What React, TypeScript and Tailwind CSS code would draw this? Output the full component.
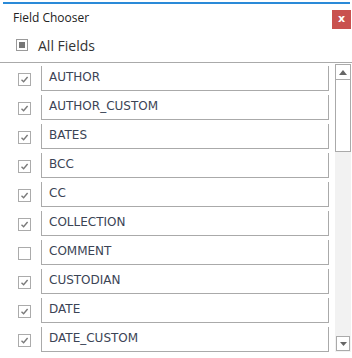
import React from "react";

const fields = [
  { name: "AUTHOR", checked: true },
  { name: "AUTHOR_CUSTOM", checked: true },
  { name: "BATES", checked: true },
  { name: "BCC", checked: true },
  { name: "CC", checked: true },
  { name: "COLLECTION", checked: true },
  { name: "COMMENT", checked: false },
  { name: "CUSTODIAN", checked: true },
  { name: "DATE", checked: true },
  { name: "DATE_CUSTOM", checked: true },
];

function CheckBox({ checked }: { checked: boolean }) {
  return (
    <div className="w-[13px] h-[13px] shrink-0 border border-[#ababab] bg-white flex items-center justify-center">
      {checked && (
        <svg width="9" height="9" viewBox="0 0 9 9">
          <path d="M1.5 4.8 L3.6 6.8 L7.6 2" fill="none" stroke="#7a7a7a" strokeWidth="1.4" />
        </svg>
      )}
    </div>
  );
}

export default function App() {
  return (
    <div className="w-[352px] h-[358px] bg-white overflow-hidden relative">
      <div className="pt-[2px] pl-[3px] pr-[2px]">
        <div className="h-[2px] bg-[#2a8ad8]" />
      </div>

      <div className="flex items-start justify-between h-[30px]">
        <span
          className="ml-[13px] mt-[6px] text-[12px] leading-[16px] text-[#222]"
          style={{ fontFamily: '"Open Sans", sans-serif' }}
        >
          Field Chooser
        </span>
        <button className="mt-[6px] mr-[1px] w-[19px] h-[19px] bg-[#c9514f] flex items-center justify-center">
          <span
            className="text-white text-[11px] font-bold leading-none mb-[2px]"
            style={{ fontFamily: '"DejaVu Sans", sans-serif' }}
          >
            x
          </span>
        </button>
      </div>

      <div className="flex items-center h-[22px] mb-[6px]">
        <div className="ml-[16px] w-[12px] h-[12px] border border-[#9a9a9a] flex items-center justify-center">
          <div className="w-[6px] h-[6px] bg-[#777]" />
        </div>
        <span
          className="ml-[10px] text-[14px] text-[#333]"
          style={{ fontFamily: '"Open Sans", sans-serif' }}
        >
          All Fields
        </span>
      </div>

      <div className="h-px bg-[#aaaaaa]" />

      <div className="flex">
        <div className="flex flex-col gap-[4px] pt-[3px]">
          {fields.map((f) => (
            <div key={f.name} className="flex items-center h-[25px]">
              <div className="ml-[18px] mt-[1px]">
                <CheckBox checked={f.checked} />
              </div>
              <div
                className="ml-[10px] w-[288px] h-[25px] border-l border-r border-b border-[#aaaaaa] pl-[7px] pb-[2px] flex items-center text-[12px] text-[#3b4455]"
                style={{ fontFamily: '"DejaVu Sans", sans-serif' }}
              >
                {f.name}
              </div>
            </div>
          ))}
        </div>

        <div className="ml-[6px] mt-[1px] w-[16px] h-[288px] bg-[#f2f2f2] flex flex-col">
          <div className="h-[16px] border border-[#aaaaaa] bg-white flex items-center justify-center">
            <svg width="8" height="5" viewBox="0 0 8 5">
              <path d="M0 5 L4 0 L8 5 Z" fill="#666" />
            </svg>
          </div>
          <div className="h-[72px] border-l border-r border-b border-[#aaaaaa] bg-white" />
          <div className="flex-1" />
          <div className="mx-[1px] mb-[1px] h-[15px] border border-[#aaaaaa] bg-white flex items-center justify-center">
            <svg width="7" height="4" viewBox="0 0 7 4">
              <path d="M0 0 L7 0 L3.5 4 Z" fill="#666" />
            </svg>
          </div>
        </div>
      </div>
    </div>
  );
}
